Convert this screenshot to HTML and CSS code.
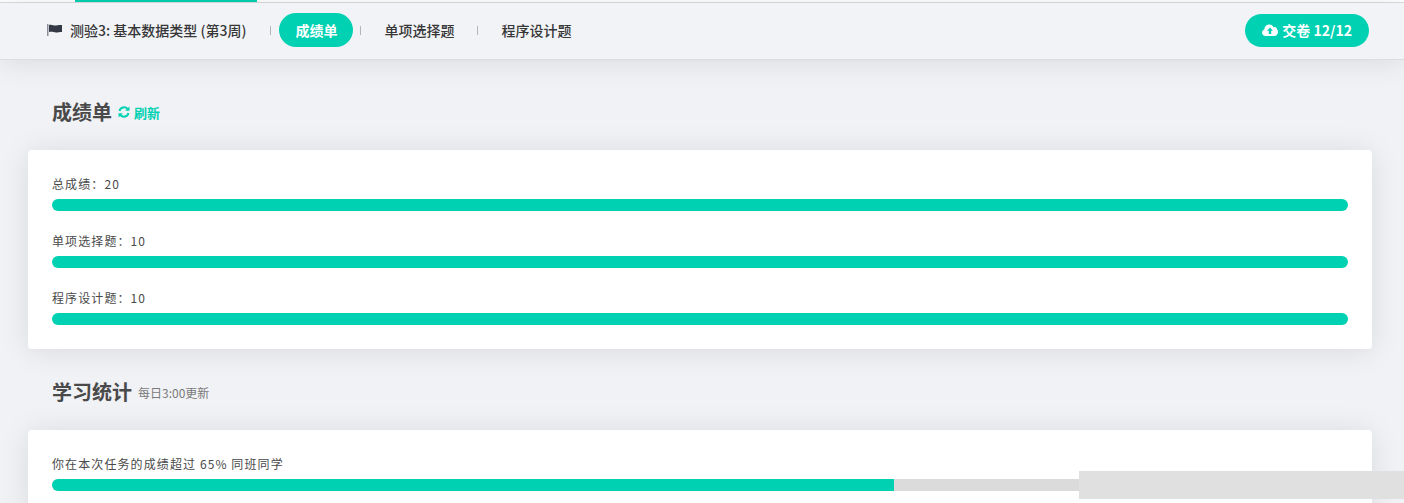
FILE: index.html
```html
<!DOCTYPE HTML>
<html>
	<head>
		<title>成绩单</title>
		<meta charset="utf-8" />
		<link rel="stylesheet" href="styles.css">
	</head>
	<body>
		<div class="top-strip"><div class="top-progress"></div></div>

		<nav class="nav">
			<div class="nav-title">
				<svg class="flag" width="16" height="12" viewBox="0 0 16 12">
					<rect x="0" y="0" width="1.5" height="12" fill="#8a8f99"/>
					<path d="M2 1 C5 0 7 2 9 1.5 C11 1 13 1 15 1 L15 8 C12.500 8 11 8.500 9 8.500 C7 8.500 5 7.500 2 8 Z" fill="#333a45"/>
				</svg>
				<span>测验3: 基本数据类型 (第3周)</span>
			</div>
			<span class="nav-sep"></span>
			<a class="nav-tab active">成绩单</a>
			<span class="nav-sep"></span>
			<a class="nav-tab">单项选择题</a>
			<span class="nav-sep"></span>
			<a class="nav-tab">程序设计题</a>
			<button class="submit-btn">
				<svg width="16" height="12" viewBox="0 0 16 12">
					<path d="M3.500 12 C1.500 12 0 10.500 0 8.600 C0 7 1 5.800 2.400 5.400 C2.400 2.800 4.500 0.500 7.200 0.500 C9.200 0.500 10.900 1.700 11.600 3.400 C12 3.200 12.400 3.100 12.800 3.100 C14 3.100 14.900 4.100 14.900 5.300 C15.600 5.900 16 6.800 16 7.900 C16 10.200 14.300 12 12.200 12 Z" fill="#fff"/>
					<path d="M8 3.500 L11 6.800 L9.200 6.800 L9.200 10 L6.800 10 L6.800 6.800 L5 6.800 Z" fill="#00d1b2"/>
				</svg>
				<span>交卷 12/12</span>
			</button>
		</nav>

		<main class="content">
			<h2 class="section-title">
				成绩单
				<a class="refresh">
					<svg width="12" height="12" viewBox="0 0 12 12" fill="none" stroke="#00d1b2" stroke-width="2">
						<path d="M1.500 5 A4.600 4.600 0 0 1 9.600 3"/>
						<path d="M10.500 7 A4.600 4.600 0 0 1 2.400 9"/>
						<path d="M11.500 0.500 L11.500 4.800 L7.200 4.800 Z" fill="#00d1b2" stroke="none"/>
						<path d="M0.500 11.500 L0.500 7.200 L4.800 7.200 Z" fill="#00d1b2" stroke="none"/>
					</svg>
					刷新
				</a>
			</h2>
			<section class="card">
				<div class="stat">
					<div class="stat-label">总成绩：20</div>
					<div class="bar"><div class="bar-fill" style="width: 100%"></div></div>
				</div>
				<div class="stat">
					<div class="stat-label">单项选择题：10</div>
					<div class="bar"><div class="bar-fill" style="width: 100%"></div></div>
				</div>
				<div class="stat">
					<div class="stat-label">程序设计题：10</div>
					<div class="bar"><div class="bar-fill" style="width: 100%"></div></div>
				</div>
			</section>

			<h2 class="section-title">
				学习统计
				<small class="note">每日3:00更新</small>
			</h2>
			<section class="card">
				<div class="stat">
					<div class="stat-label">你在本次任务的成绩超过 65% 同班同学</div>
					<div class="bar"><div class="bar-fill" style="width: 65%"></div></div>
				</div>
			</section>
		</main>

		<div class="corner-block"></div>
	</body>
</html>
```

FILE: styles.css
```css
* {
	box-sizing: border-box;
}

html, body {
	height: 503px;
}

body {
	margin: 0;
	background: #f1f2f6;
	font-family: "Noto Sans CJK SC", "Noto Sans", sans-serif;
	color: #4a4a4a;
	overflow: hidden;
	position: relative;
}

.top-strip {
	height: 3px;
	background: #fff;
	border-bottom: 1px solid #dcdde1;
	padding-left: 75px;
}

.top-progress {
	width: 182px;
	height: 2px;
	background: #00d1b2;
}

.nav {
	height: 57px;
	display: flex;
	align-items: center;
	padding: 0 35px 2px 47px;
	background: #f2f3f7;
	border-bottom: 1px solid #dcdde1;
	box-shadow: 0 2px 30px rgba(0, 0, 0, 0.1);
	position: relative;
}

.nav-title {
	display: flex;
	align-items: center;
	gap: 7px;
	font-size: 14px;
	font-weight: 500;
	color: #363636;
	margin-right: 24px;
}

.nav-sep {
	width: 1px;
	height: 9px;
	background: #b5b5b5;
}

.nav-tab {
	font-size: 14px;
	font-weight: 500;
	color: #363636;
	padding: 0 23px;
}

.nav-tab.active {
	height: 34px;
	line-height: 34px;
	margin: 0 7px 0 8px;
	padding: 0 16px;
	border-radius: 17px;
	background: #00d1b2;
	color: #fff;
	font-weight: 700;
}

.submit-btn {
	margin-left: auto;
	height: 33px;
	padding: 0 17px;
	display: flex;
	align-items: center;
	gap: 4px;
	border: 0;
	border-radius: 17px;
	background: #00d1b2;
	color: #fff;
	font-family: inherit;
	font-size: 14px;
	font-weight: 700;
}

.content {
	padding: 40px 32px 0 28px;
}

.section-title {
	height: 22px;
	margin: 0 0 28px;
	padding-left: 24px;
	display: flex;
	align-items: center;
	gap: 6px;
	font-size: 20px;
	font-weight: 700;
	color: #4a4a4a;
}

.card + .section-title {
	margin-top: 31px;
}

.refresh {
	display: flex;
	align-items: center;
	gap: 4px;
	font-size: 13px;
	font-weight: 700;
	color: #00d1b2;
	padding-top: 2px;
}

.note {
	font-size: 12px;
	font-weight: 400;
	color: #7a7a7a;
	padding-top: 3px;
}

.card {
	background: #fff;
	border-radius: 4px;
	padding: 24px;
	box-shadow: 0 2px 30px rgba(0, 0, 0, 0.1);
	position: relative;
}

.stat + .stat {
	margin-top: 20px;
}

.stat-label {
	height: 21px;
	font-size: 12px;
	line-height: 20px;
	letter-spacing: 1.1px;
	color: #4a4a4a;
}

.bar {
	height: 12px;
	margin-top: 4px;
	border-radius: 6px;
	background: #dbdbdb;
	overflow: hidden;
}

.bar-fill {
	height: 100%;
	background: #00d1b2;
}

.corner-block {
	position: absolute;
	left: 1079px;
	top: 471px;
	width: 325px;
	height: 28px;
	background: #e0e0e0;
}
```
